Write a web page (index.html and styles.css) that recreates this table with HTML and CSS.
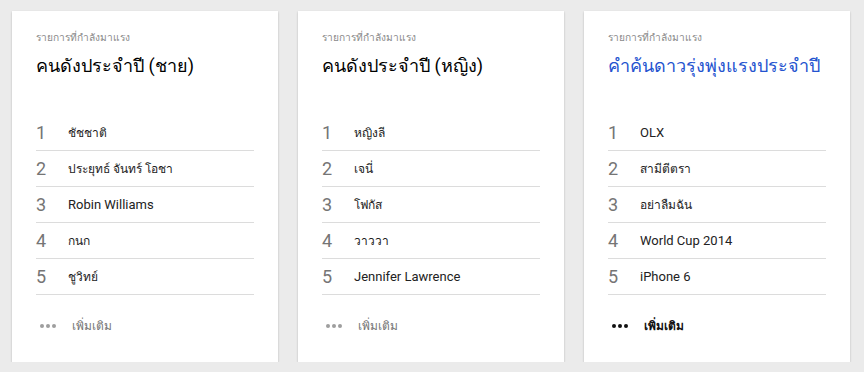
FILE: index.html
```html
<!DOCTYPE html>
<html lang="th">
<head>
<meta charset="utf-8">
<link rel="stylesheet" href="styles.css">
</head>
<body>
<div class="cards">
  <section class="card">
    <div class="sub">รายการที่กำลังมาแรง</div>
    <h2 class="title">คนดังประจำปี (ชาย)</h2>
    <ol class="list">
      <li><span class="num">1</span><span class="txt th">ชัชชาติ</span></li>
      <li><span class="num">2</span><span class="txt th">ประยุทธ์ จันทร์ โอชา</span></li>
      <li><span class="num">3</span><span class="txt">Robin Williams</span></li>
      <li><span class="num">4</span><span class="txt th">กนก</span></li>
      <li><span class="num">5</span><span class="txt th">ชูวิทย์</span></li>
    </ol>
    <div class="more"><span class="dots"><i></i><i></i><i></i></span><span class="more-txt">เพิ่มเติม</span></div>
  </section>
  <section class="card">
    <div class="sub">รายการที่กำลังมาแรง</div>
    <h2 class="title">คนดังประจำปี (หญิง)</h2>
    <ol class="list">
      <li><span class="num">1</span><span class="txt th">หญิงลี</span></li>
      <li><span class="num">2</span><span class="txt th">เจนี่</span></li>
      <li><span class="num">3</span><span class="txt th">โฟกัส</span></li>
      <li><span class="num">4</span><span class="txt th">วาววา</span></li>
      <li><span class="num">5</span><span class="txt">Jennifer Lawrence</span></li>
    </ol>
    <div class="more"><span class="dots"><i></i><i></i><i></i></span><span class="more-txt">เพิ่มเติม</span></div>
  </section>
  <section class="card">
    <div class="sub">รายการที่กำลังมาแรง</div>
    <h2 class="title title-blue">คำค้นดาวรุ่งพุ่งแรงประจำปี</h2>
    <ol class="list">
      <li><span class="num">1</span><span class="txt">OLX</span></li>
      <li><span class="num">2</span><span class="txt th">สามีตีตรา</span></li>
      <li><span class="num">3</span><span class="txt th">อย่าลืมฉัน</span></li>
      <li><span class="num">4</span><span class="txt">World Cup 2014</span></li>
      <li><span class="num">5</span><span class="txt">iPhone 6</span></li>
    </ol>
    <div class="more more-active"><span class="dots"><i></i><i></i><i></i></span><span class="more-txt">เพิ่มเติม</span></div>
  </section>
</div>
</body>
</html>
```
FILE: styles.css
```css
html, body {
  margin: 0;
  padding: 0;
  background: #ebebeb;
  font-family: Roboto, "Noto Sans", "Liberation Sans", sans-serif;
}
.cards {
  display: flex;
  gap: 20px;
  padding: 11px 14px 0 12px;
}
.card {
  width: 266px;
  height: 351px;
  box-sizing: border-box;
  background: #fff;
  box-shadow: 0 1px 2px rgba(0,0,0,0.22);
  padding: 19px 24px 0 24px;
  display: flex;
  flex-direction: column;
}
.sub {
  font-size: 10.2px;
  line-height: 16px;
  color: #8a8a8a;
}
.title {
  margin: 6px 0 0 0;
  font-size: 18px;
  line-height: 28px;
  font-weight: normal;
  color: #000;
  white-space: nowrap;
}
.title-blue {
  color: #2453cf;
}
.list {
  list-style: none;
  margin: 35px 0 0 0;
  padding: 0;
}
.list li {
  display: flex;
  align-items: center;
  height: 35px;
  border-bottom: 1px solid #dcdcdc;
}
.num {
  width: 32px;
  font-size: 18px;
  color: #757575;
}
.txt {
  font-size: 13px;
  color: #222;
}
.txt.th {
  font-size: 12px;
}
.more {
  display: flex;
  align-items: center;
  height: 61px;
}
.dots {
  display: flex;
  gap: 2px;
  width: 36px;
  padding-left: 4px;
  box-sizing: border-box;
}
.dots i {
  width: 4px;
  height: 4px;
  border-radius: 50%;
  background: #9e9e9e;
}
.more-txt {
  font-size: 12px;
  color: #757575;
}
.more-active .dots i {
  background: #111;
}
.more-active .more-txt {
  color: #111;
  font-weight: bold;
}
```
